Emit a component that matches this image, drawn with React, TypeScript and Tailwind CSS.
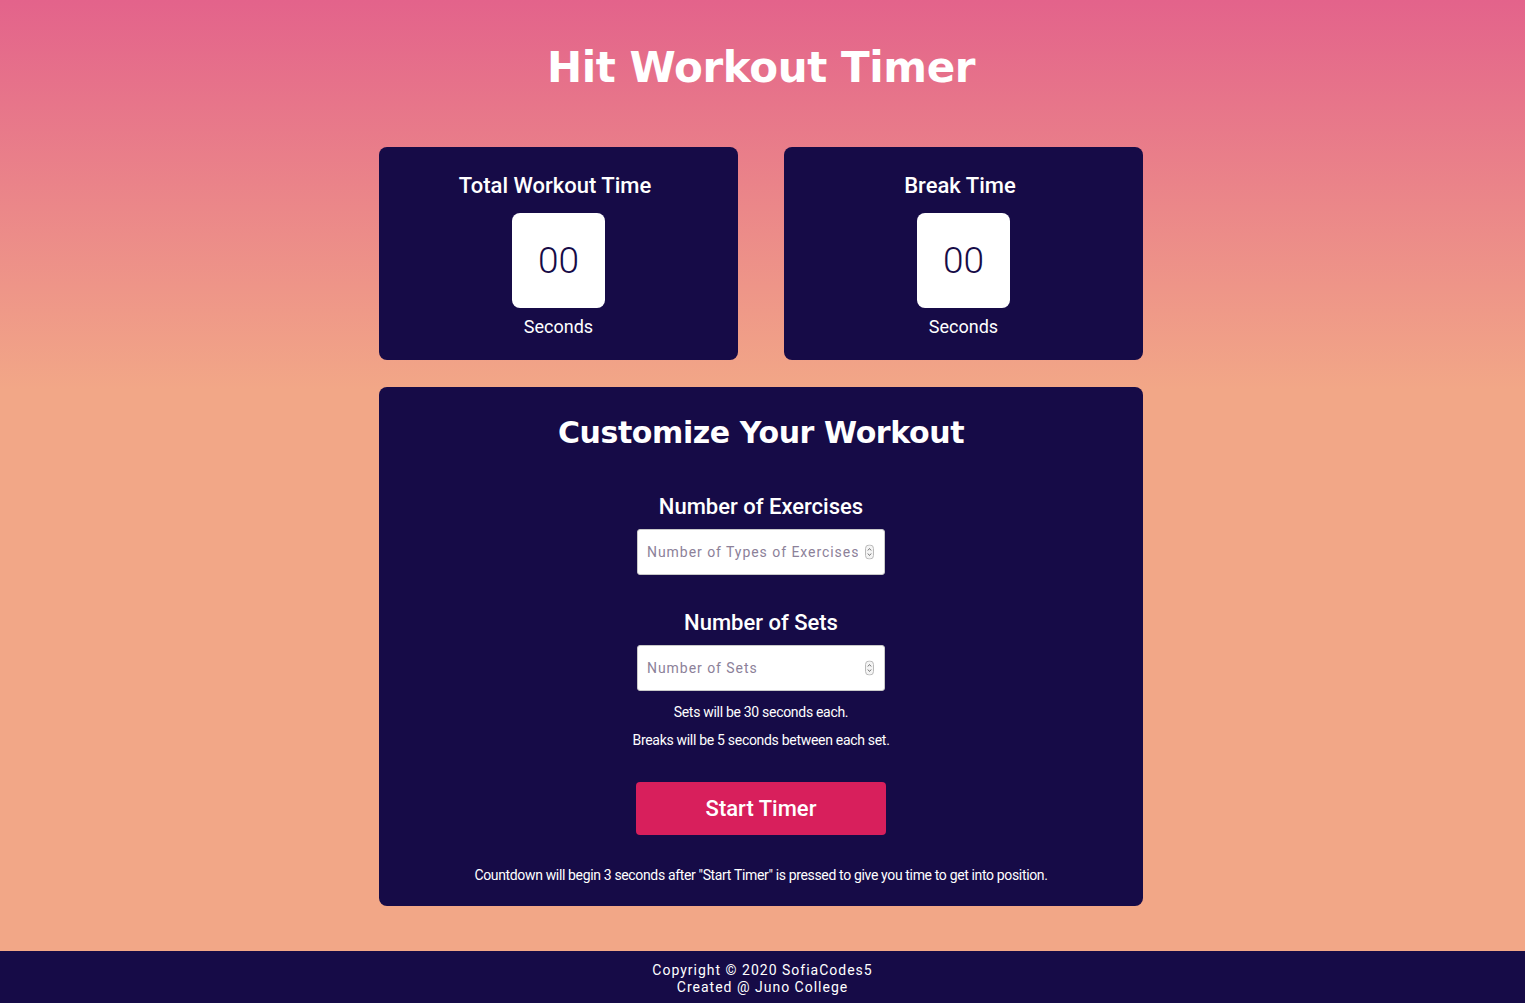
import { FC } from "react";

const heading = "font-['DejaVu_Sans',sans-serif] font-bold";
const body = "font-['Roboto',sans-serif]";

const TimerCard: FC<{ title: string }> = ({ title }) => (
  <div className="w-[359px] h-[213px] rounded-lg bg-[#160b47] flex flex-col items-center pt-[25px]">
    <h2 className="mr-[7px] text-[22px] leading-[28px] font-medium text-white">{title}</h2>
    <div className="mt-[13px] w-[93px] h-[95px] rounded-lg bg-white flex items-center justify-center">
      <span className="text-[37px] font-light text-[#160b47] leading-none">00</span>
    </div>
    <p className="mt-[7px] text-[18px] leading-[24px] text-white">Seconds</p>
  </div>
);

const Spinner = () => (
  <svg
    className="absolute right-[11px] top-1/2 -translate-y-1/2"
    width="9"
    height="15"
    viewBox="0 0 9 15"
    aria-hidden="true"
  >
    <rect x="0.5" y="0.5" width="8" height="14" rx="3.5" fill="#f4f4f4" stroke="#b9b9b9" />
    <path d="M2.8 6 L4.5 4 L6.2 6" fill="none" stroke="#777" strokeWidth="1" />
    <path d="M2.8 9 L4.5 11 L6.2 9" fill="none" stroke="#777" strokeWidth="1" />
  </svg>
);

const NumberField: FC<{ label: string; placeholder: string; first?: boolean }> = ({
  label,
  placeholder,
  first,
}) => (
  <div className={`flex flex-col items-center ${first ? "mt-[39px]" : "mt-[34px]"}`}>
    <label className="text-[22px] leading-[28px] font-medium text-white">{label}</label>
    <div className="relative mt-[8px] w-[248px] h-[46px]">
      <input
        type="text"
        placeholder={placeholder}
        className="w-full h-full rounded-[3px] border border-[#c9c9c9] bg-white pl-[9px] pr-[26px] text-[14px] tracking-[0.95px] text-[#160b47] placeholder:text-[#8c8199] outline-none"
      />
      <Spinner />
    </div>
  </div>
);

export default function App() {
  return (
    <div
      className={`${body} min-h-screen flex flex-col bg-[linear-gradient(180deg,#e3638b_0px,#f2a787_390px,#f2a787_100%)]`}
    >
      <main className="flex-1 flex flex-col items-center pr-[3px]">
        <h1 className={`${heading} mt-[39px] text-[42px] leading-[58px] tracking-[-0.4px] text-white`}>
          Hit Workout Timer
        </h1>

        <div className="mt-[50px] w-[764px] flex gap-[46px]">
          <TimerCard title="Total Workout Time" />
          <TimerCard title="Break Time" />
        </div>

        <section className="mt-[27px] w-[764px] rounded-lg bg-[#160b47] flex flex-col items-center pt-[25px] pb-[21px] text-white">
          <h2 className={`${heading} text-[30px] leading-[42px] tracking-[-0.4px]`}>Customize Your Workout</h2>

          <NumberField label="Number of Exercises" placeholder="Number of Types of Exercises" first />
          <NumberField label="Number of Sets" placeholder="Number of Sets" />

          <div className="mt-[7px] text-[14px] leading-[28px] tracking-[-0.3px] text-center">
            <p>Sets will be 30 seconds each.</p>
            <p>Breaks will be 5 seconds between each set.</p>
          </div>

          <button className="mt-[28px] w-[250px] h-[53px] rounded-[4px] bg-[#d81f5c] text-[22px] font-medium text-white">
            Start Timer
          </button>

          <p className="mt-[30px] text-[14px] leading-[20px] tracking-[-0.35px]">
            Countdown will begin 3 seconds after "Start Timer" is pressed to give you time to get into position.
          </p>
        </section>
      </main>

      <footer className="mt-[45px] h-[52px] bg-[#160b47] pt-[11px] text-center text-[14px] leading-[17px] tracking-[1px] text-white">
        <p>Copyright © 2020 SofiaCodes5</p>
        <p>Created @ Juno College</p>
      </footer>
    </div>
  );
}
